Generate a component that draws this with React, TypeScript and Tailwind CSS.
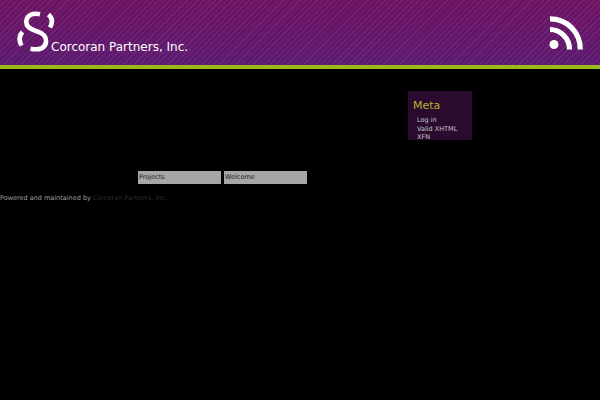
const font = "font-['DejaVu_Sans',sans-serif]";

const Logo = () => (
	<svg width="40" height="42" viewBox="0 0 40 42" fill="none" stroke="#fff" strokeWidth="4.6" className="block">
		<path d="M23 3.2 C 16 1.6 10 4 9.3 10 C 8.7 15.500 13 18 19 20 C 25.500 22 29.500 24.500 29 31 C 28.500 37 23 39.500 13.500 37.700" />
		<path d="M31.500 3.500 C 35.500 7 35.500 12 33 16.500" />
		<path d="M5.500 21 C 2 25 2 30 4.500 34.500" />
	</svg>
);

const Rss = () => (
	<svg width="34" height="34" viewBox="0 0 34 34" fill="none" stroke="#fff" strokeWidth="5.200" className="block">
		<circle cx="5" cy="28.500" r="4.500" fill="#fff" stroke="none" />
		<path d="M1 13.500 C 11 13.500 20.500 22 20.500 33.500" />
		<path d="M1 2.800 C 18 2.800 31.300 16 31.300 33.500" />
	</svg>
);

export default function App() {
	return (
		<div className={`${font} min-h-[400px] bg-black`}>
			<header className="h-[69px] border-b-4 border-[#9cb81f] bg-[repeating-linear-gradient(135deg,rgba(255,255,255,0.07)_0px,rgba(255,255,255,0.07)_1px,transparent_1px,transparent_4px),linear-gradient(180deg,#6e1262,#5c1a70)] flex items-start justify-between">
				<div className="flex items-end pl-[17px] pt-[11px]">
					<Logo />
					<span className="ml-[-6px] mb-[-1px] text-[12px] leading-[14px] text-white">Corcoran Partners, Inc.</span>
				</div>
				<div className="pr-[17px] pt-[16px]">
					<Rss />
				</div>
			</header>
			<main className="pt-[22px]">
				<aside className="ml-[408px] h-[49px] w-[64px] bg-[#2a0a2e] pl-[5px] pt-[8px]">
					<h2 className="text-[11px] leading-[13px] text-[#b5b52a]">Meta</h2>
					<ul className="mt-[4px] pl-[4px] text-[6.500px] leading-[8.500px] text-[#c8c8c8]">
						<li>Log in</li>
						<li>Valid XHTML</li>
						<li>XFN</li>
					</ul>
				</aside>
				<nav className="ml-[138px] mt-[31px] flex gap-[3px]">
					<a className="h-[13px] w-[83px] bg-[#a6a6a6] pl-[1px] text-[6.500px] leading-[13px] text-[#222]">Projects</a>
					<a className="h-[13px] w-[83px] bg-[#a6a6a6] pl-[1px] text-[6.500px] leading-[13px] text-[#222]">Welcome</a>
				</nav>
				<footer className="mt-[10px] text-[6.500px] leading-[8px] text-[#a0a0a0]">
					Powered and maintained by <a className="text-[#2c2c2c]">Corcoran Partners, Inc.</a>
				</footer>
			</main>
		</div>
	);
}
